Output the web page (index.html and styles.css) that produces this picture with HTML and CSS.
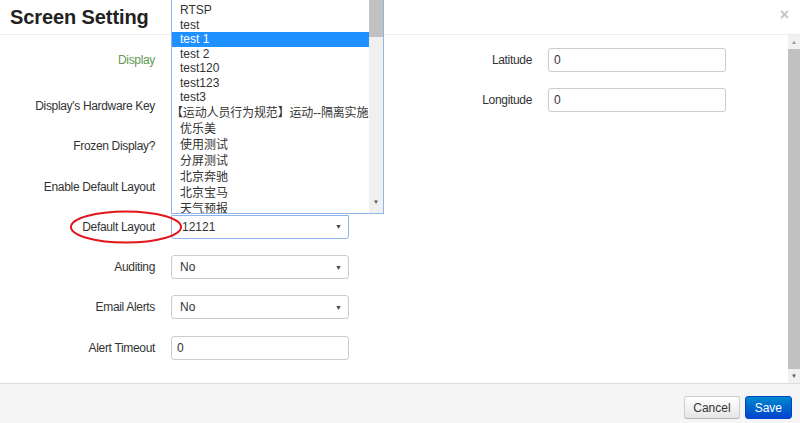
FILE: index.html
```html
<!DOCTYPE html>
<html>
<head>
	<title>Screen Setting</title>
	<link rel="stylesheet" href="styles.css">
</head>
<body>
	<div class="modal">
		<div class="modal-header">
			<h3>Screen Setting</h3>
			<span class="close">&times;</span>
		</div>

		<div class="modal-body">
			<div class="form">
				<div class="col">
					<div class="row first">
						<label class="success">Display</label>
						<input type="text" value="">
					</div>
					<div class="row">
						<label>Display's Hardware Key</label>
						<input type="text" value="">
					</div>
					<div class="row">
						<label>Frozen Display?</label>
						<div class="select"><span class="caret">&#9660;</span></div>
					</div>
					<div class="row">
						<label>Enable Default Layout</label>
						<div class="select"><span class="caret">&#9660;</span></div>
					</div>
					<div class="row">
						<label>Default Layout</label>
						<div class="select focus">12121<span class="caret">&#9660;</span></div>
					</div>
					<div class="row">
						<label>Auditing</label>
						<div class="select">No<span class="caret">&#9660;</span></div>
					</div>
					<div class="row">
						<label>Email Alerts</label>
						<div class="select">No<span class="caret">&#9660;</span></div>
					</div>
					<div class="row">
						<label>Alert Timeout</label>
						<input type="text" value="0">
					</div>
				</div>

				<div class="col">
					<div class="row">
						<label>Latitude</label>
						<input type="text" value="0">
					</div>
					<div class="row">
						<label>Longitude</label>
						<input type="text" value="0">
					</div>
				</div>
			</div>

			<div class="scrollbar">
				<div class="arrow up">&#9650;</div>
				<div class="thumb"></div>
				<div class="arrow down">&#9660;</div>
			</div>
		</div>

		<div class="modal-footer">
			<button class="btn">Cancel</button>
			<button class="btn btn-primary">Save</button>
		</div>

		<!-- open list of the Default Layout select, scrolled down a little -->
		<div class="dropdown">
			<div class="options">
				<div class="option">RTSP</div>
				<div class="option">test</div>
				<div class="option selected">test 1</div>
				<div class="option">test 2</div>
				<div class="option">test120</div>
				<div class="option">test123</div>
				<div class="option">test3</div>
				<div class="option cjk"><span class="bracket">【运动人员行为规范】运动--隔离实施</span></div>
				<div class="option cjk">优乐美</div>
				<div class="option cjk">使用测试</div>
				<div class="option cjk">分屏测试</div>
				<div class="option cjk">北京奔驰</div>
				<div class="option cjk">北京宝马</div>
				<div class="option cjk">天气预报</div>
			</div>
			<div class="list-scroll">
				<div class="list-thumb"></div>
				<div class="list-arrow">&#9660;</div>
			</div>
		</div>

		<svg class="mark" width="116" height="36" viewBox="0 0 116 36">
			<ellipse cx="58" cy="18" rx="55" ry="15.5" fill="none" stroke="#e0161b" stroke-width="2"/>
		</svg>
	</div>
</body>
</html>
```

FILE: styles.css
```css
* {
	margin: 0;
	padding: 0;
	box-sizing: border-box;
}

body {
	font-family: "Liberation Sans", Arial, "Noto Sans CJK SC", sans-serif;
	font-size: 12px;
	color: #333;
	background: #fff;
	overflow: hidden;
}

.modal {
	position: relative;
	width: 800px;
	height: 423px;
	display: flex;
	flex-direction: column;
}

.modal-header {
	height: 35px;
	border-bottom: 1px solid #eee;
	display: flex;
	align-items: center;
	justify-content: space-between;
	padding: 0 11px 1px 10px;
}

.modal-header h3 {
	font-size: 20px;
	font-weight: bold;
	color: #222;
	line-height: 24px;
	letter-spacing: -0.1px;
}

.close {
	font-size: 16px;
	font-weight: bold;
	color: #c4c4c4;
	margin-top: -4px;
}

.modal-body {
	height: 348px;
	display: flex;
}

.form {
	flex: 1;
	display: flex;
	padding: 13px 0 0 10px;
}

.col {
	width: 377px;
}

.row {
	display: flex;
	align-items: center;
	gap: 16px;
	height: 24px;
	margin-bottom: 16.3px;
}

.row.first {
	margin-bottom: 22px;
}

.row label {
	width: 145px;
	text-align: right;
	letter-spacing: -0.33px;
}

.success {
	color: #5f9a4f;
}

.row input,
.select {
	width: 178px;
	height: 24px;
	border: 1px solid #ccc;
	border-radius: 3px;
	font: inherit;
	color: #333;
	padding: 0 5px;
	background: #fff;
}

.select {
	display: flex;
	align-items: center;
	justify-content: space-between;
	padding: 0 6px 0 8px;
}

.select .caret {
	margin-left: auto;
}

.select.focus {
	border-color: #8fb6e8;
	border-radius: 0 0 3px 3px;
	padding-left: 10px;
}

.caret {
	font-size: 7px;
	color: #444;
}

.scrollbar {
	width: 12px;
	background: #f1f1f1;
	display: flex;
	flex-direction: column;
	align-items: center;
}

.arrow {
	font-size: 6px;
	color: #999;
	height: 14px;
	line-height: 14px;
}

.arrow.down {
	color: #555;
}

.thumb {
	flex: 1;
	width: 12px;
	background: #c1c1c1;
}

.modal-footer {
	flex: 1;
	background: #f5f5f5;
	border-top: 1px solid #ddd;
	display: flex;
	justify-content: flex-end;
	align-items: flex-start;
	gap: 5px;
	padding: 12px 8px 0 0;
}

.btn {
	font-family: inherit;
	font-size: 12px;
	height: 23px;
	padding: 0 8px;
	border: 1px solid #ccc;
	border-bottom-color: #b3b3b3;
	border-radius: 3px;
	color: #333;
	background: linear-gradient(#fff, #e6e6e6);
}

.btn-primary {
	color: #fff;
	border-color: #04c;
	background: linear-gradient(#08c, #04c);
	padding: 0 9px;
}

.dropdown {
	position: absolute;
	left: 171px;
	top: -13px;
	width: 213px;
	height: 227px;
	border: 1px solid #8fb6e8;
	background: #fff;
	display: flex;
	overflow: hidden;
}

.options {
	flex: 1;
	padding-top: 15px;
}

.option {
	height: 14.5px;
	line-height: 14.5px;
	padding-left: 8px;
	white-space: nowrap;
	color: #333;
}

.option.selected {
	background: #1e90ff;
	color: #fff;
}

.option.cjk {
	height: 16px;
	line-height: 17px;
}

.bracket {
	display: inline-block;
	margin-left: -9px;
	letter-spacing: -0.15px;
}

.list-scroll {
	width: 14px;
	background: #f0f0f0;
	display: flex;
	flex-direction: column;
	align-items: center;
}

.list-thumb {
	width: 14px;
	height: 49px;
	background: #c1c1c1;
}

.list-arrow {
	margin-top: auto;
	font-size: 6px;
	color: #555;
	height: 14px;
}

.mark {
	position: absolute;
	left: 68px;
	top: 209px;
}
```
